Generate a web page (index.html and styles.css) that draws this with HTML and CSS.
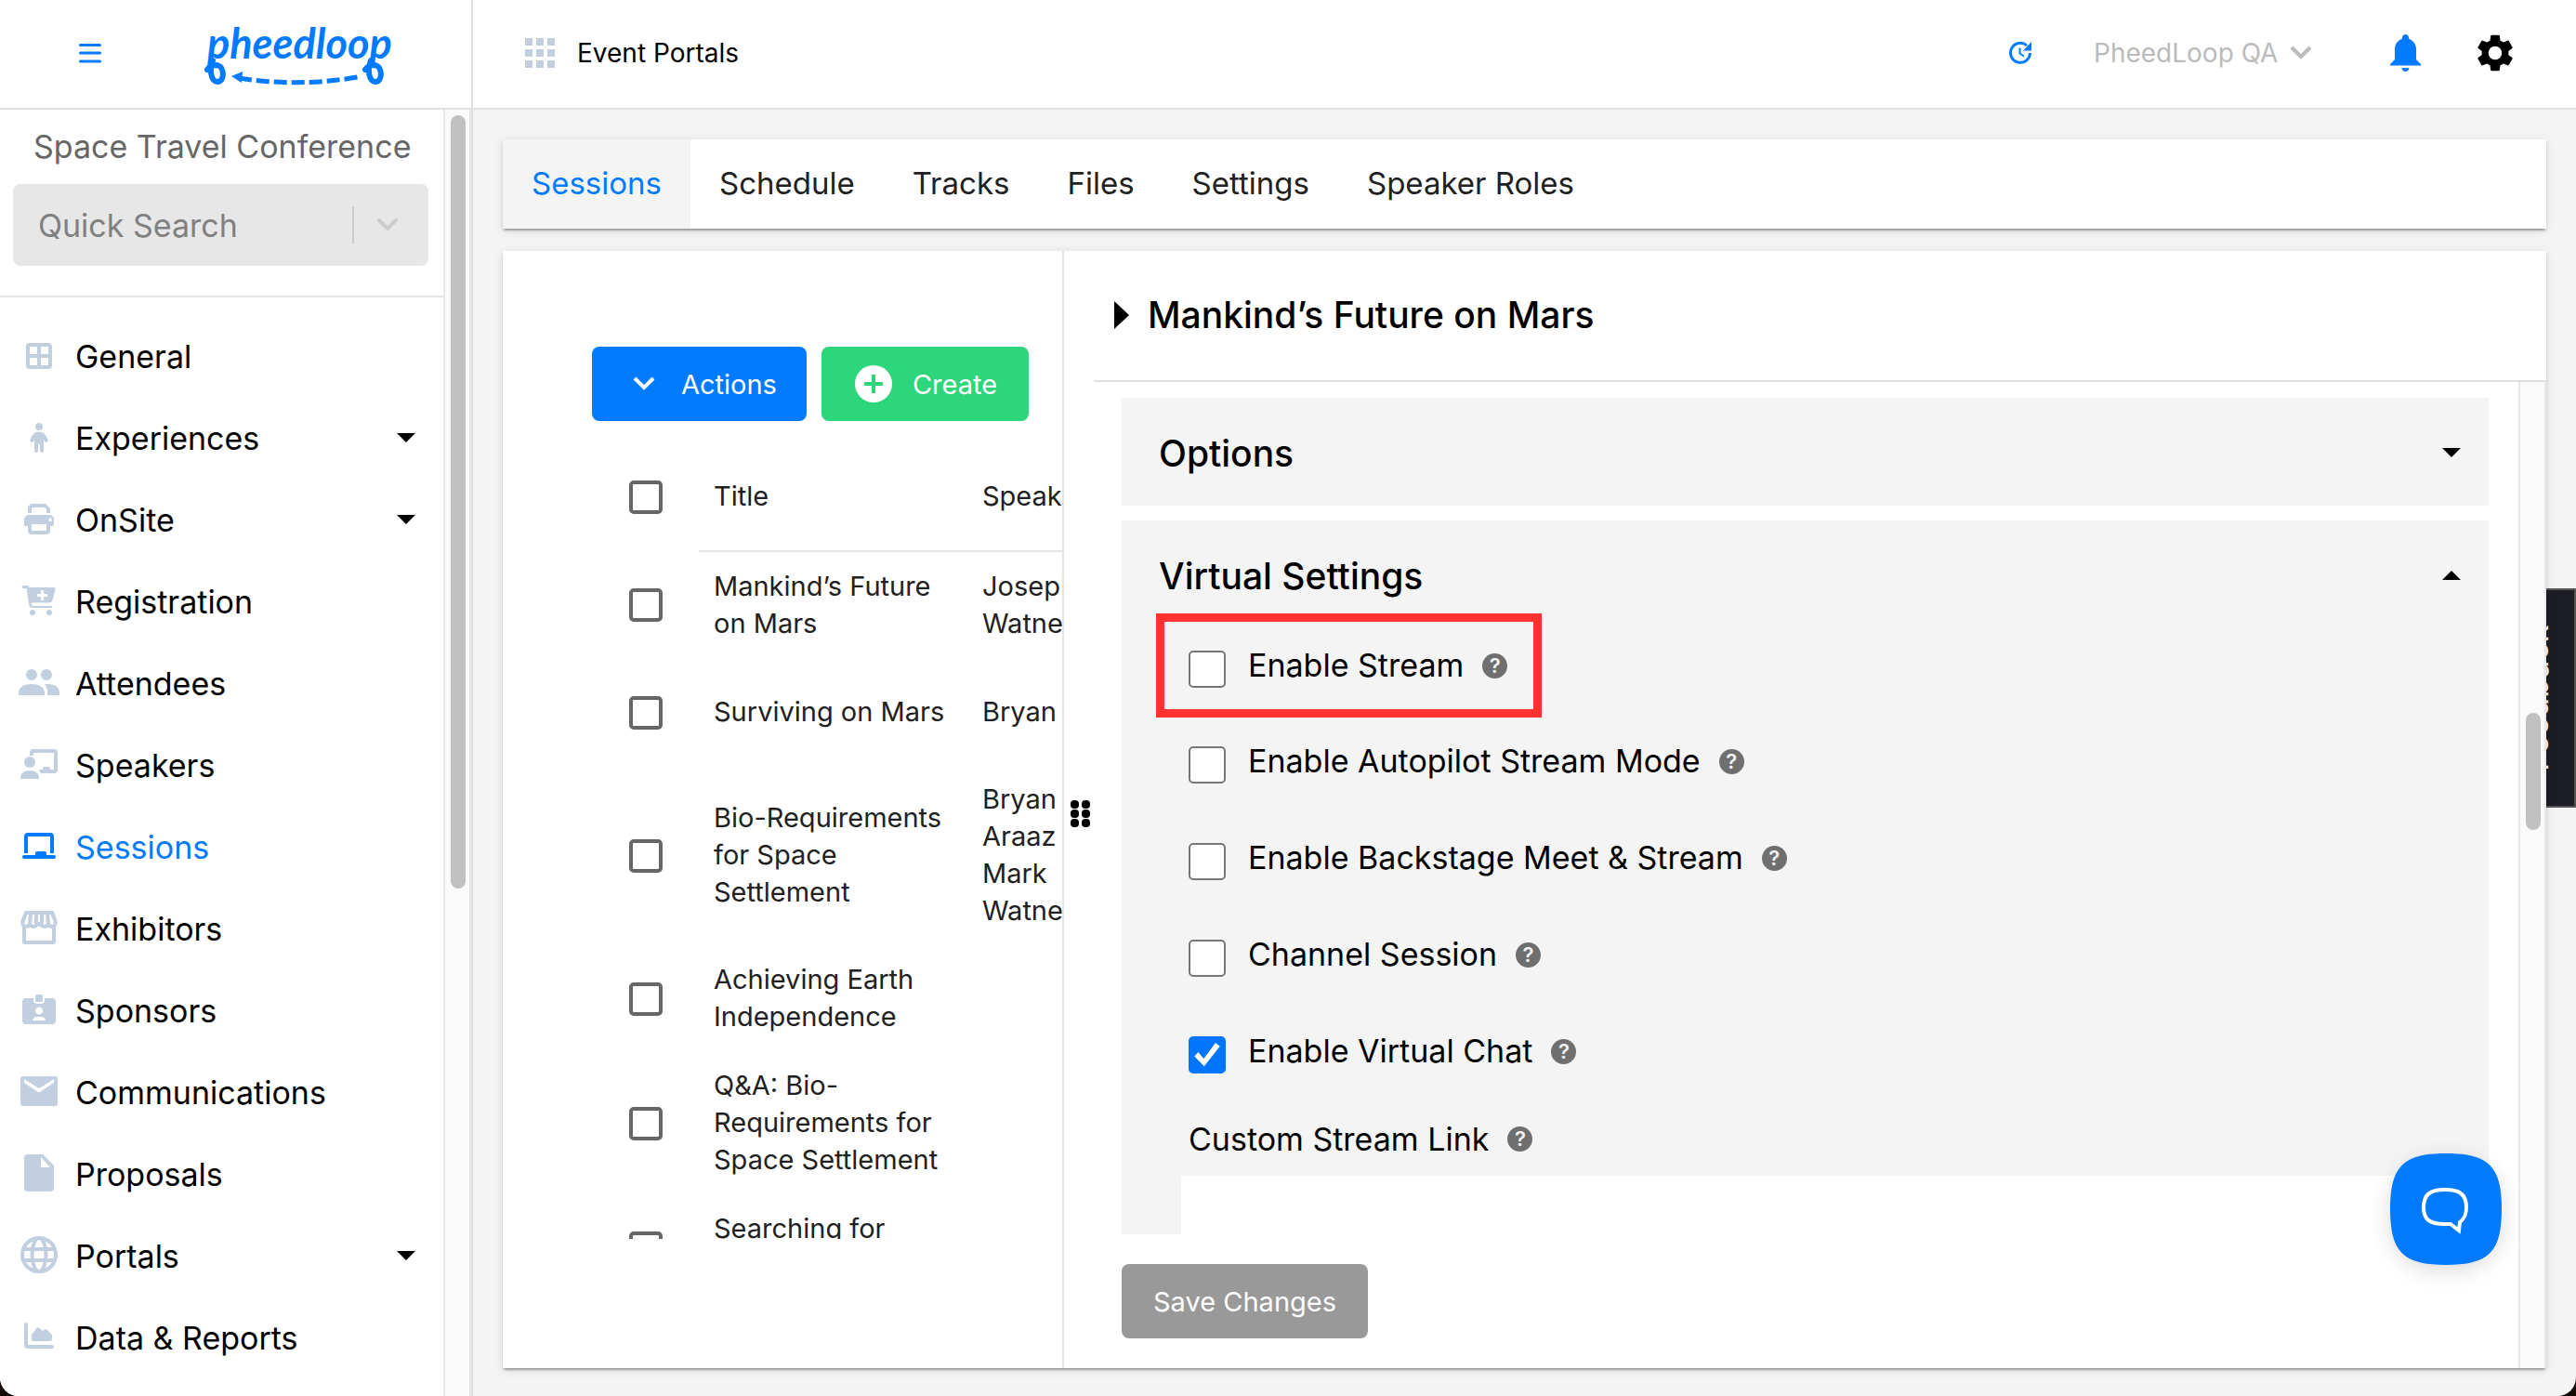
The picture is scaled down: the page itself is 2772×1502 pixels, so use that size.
FILE: index.html
```html
<!DOCTYPE html>
<html lang="en">
<head>
    <meta charset="UTF-8">
    <meta name="viewport" content="width=device-width, initial-scale=1.0">
    <title>Sessions</title>
    <link rel="stylesheet" href="styles.css">
</head>
<body>

<div class="app">

    <header class="header">
        <div class="brand">
            <button class="icon-btn" aria-label="Toggle menu">
                <svg width="24" height="24" viewBox="0 0 24 24" fill="none" stroke="#007bff" stroke-width="3" stroke-linecap="round"><path d="M1.500 3.500h21M1.500 12h21M1.500 21h21"/></svg>
            </button>
            <svg class="logo" width="204" height="76" viewBox="0 0 204 76" role="img" aria-label="pheedloop">
                <text x="4" y="44" class="logo-text">pheedloop</text>
                <g fill="none" stroke="#007bff" stroke-width="6" stroke-linecap="round">
                    <path d="M10 46c-4 10-2 23 5 23 8 0 8-17-1-18-5 0-8 2-10 5"/>
                    <path d="M180 46c-4 10-2 23 5 23 8 0 8-17-1-18-5 0-8 2-10 5"/>
                    <path d="M38 65q62 10 128-1" stroke-width="5" stroke-linecap="butt" stroke-dasharray="14 5"/>
                </g>
                <path d="M30 63l12-5-1 12z" fill="#007bff"/>
            </svg>
        </div>
        <div class="topbar">
            <a href="#" class="portals-link">
                <svg width="32" height="32" viewBox="0 0 32 32" fill="#c2cfe0"><path d="M0 0h8v8H0zM12 0h8v8h-8zM24 0h8v8h-8zM0 12h8v8H0zM12 12h8v8h-8zM24 12h8v8h-8zM0 24h8v8H0zM12 24h8v8h-8zM24 24h8v8h-8z"/></svg>
                Event Portals
            </a>
            <div class="topbar-right">
                <button class="icon-btn" aria-label="Recent updates">
                    <svg width="26" height="26" viewBox="0 0 26 26" fill="none" stroke="#007bff" stroke-width="3"><path d="M20 5A10.500 10.500 0 1 0 23.500 13"/><path d="M12.500 7.500v6l4.500 3" stroke-width="2"/><path d="M25 1v9.500h-9z" fill="#007bff" stroke="none"/></svg>
                </button>
                <div class="account">
                    <select aria-label="Account"><option>PheedLoop QA</option></select>
                    <svg width="24" height="16" viewBox="0 0 24 16" fill="none" stroke="#bbb" stroke-width="4"><path d="M2 2l10 10L22 2"/></svg>
                </div>
                <button class="icon-btn" aria-label="Notifications">
                    <svg width="33" height="40" viewBox="0 0 33 40" fill="#007bff"><path d="M16.500 0c2 0 3.500 1.500 3.500 3.500v1.200c5 1.600 8 6 8 11.300v11l5 5v1.500H0V32l5-5V16c0-5.300 3-9.700 8-11.300V3.500C13 1.500 14.500 0 16.500 0z"/><path d="M12.500 36h8c0 2.300-1.800 4-4 4s-4-1.700-4-4z"/></svg>
                </button>
                <button class="icon-btn" aria-label="Settings">
                    <svg width="40" height="40" viewBox="2 2 20 20"><path d="M19.140 12.940c.04-.3.06-.61.06-.94 0-.32-.02-.64-.07-.94l2.030-1.580c.18-.14.23-.41.12-.61l-1.920-3.320c-.12-.22-.37-.29-.59-.22l-2.390.96c-.5-.38-1.030-.7-1.620-.94l-.36-2.540c-.04-.24-.24-.41-.48-.41h-3.840c-.24 0-.43.17-.47.41l-.36 2.540c-.59.24-1.130.57-1.620.94l-2.390-.96c-.22-.08-.47 0-.59.22L2.740 8.870c-.12.21-.08.47.12.61l2.030 1.580c-.05.3-.09.63-.09.94s.02.64.07.94l-2.030 1.580c-.18.14-.23.41-.12.61l1.920 3.320c.12.22.37.29.59.22l2.390-.96c.5.38 1.030.7 1.620.94l.36 2.540c.05.24.24.41.48.41h3.840c.24 0 .44-.17.47-.41l.36-2.540c.59-.24 1.130-.56 1.620-.94l2.390.96c.22.08.47 0 .59-.22l1.920-3.320c.12-.22.07-.47-.12-.61l-2.010-1.580zM12 15.600c-1.980 0-3.600-1.620-3.600-3.600s1.620-3.600 3.600-3.600 3.600 1.620 3.600 3.600-1.620 3.600-3.600 3.600z"/></svg>
                </button>
            </div>
        </div>
    </header>

    <div class="layout">

        <aside class="sidebar">
            <div class="sidebar-content">
                <div class="event">
                    <p class="event-name">Space Travel Conference</p>
                    <div class="search">
                        <input type="text" placeholder="Quick Search" aria-label="Quick Search">
                        <svg width="22" height="16" viewBox="0 0 22 16" fill="none" stroke="#ccc" stroke-width="4" stroke-linecap="round" stroke-linejoin="round"><path d="M2 3l9 9 9-9"/></svg>
                    </div>
                </div>
                <nav class="nav">
                    <a href="#">
                        <svg viewBox="0 0 44 44"><path fill-rule="evenodd" d="M12 8h20a4 4 0 0 1 4 4v20a4 4 0 0 1-4 4H12a4 4 0 0 1-4-4V12a4 4 0 0 1 4-4zM12 12v8h8v-8zM24 12v8h8v-8zM12 24v8h8v-8zM24 24v8h8v-8z"/></svg>
                        General
                    </a>
                    <a href="#">
                        <svg viewBox="0 0 44 44"><circle cx="22" cy="10" r="4"/><path d="M22 15.500c5 0 7 3 9.500 8.500 1 2.500-2.500 4-3.500 2l-1-2v12a2 2 0 0 1-4 0v-7h-2v7a2 2 0 0 1-4 0V24l-1 2c-1 2-4.500.5-3.500-2 2.500-5.500 4.500-8.500 9.500-8.500z"/></svg>
                        Experiences
                        <i class="caret"></i>
                    </a>
                    <a href="#">
                        <svg viewBox="0 0 44 44"><path d="M10 15v-5a5 5 0 0 1 5-5h14l5 5v5h-4v-4l-2-2H16a2 2 0 0 0-2 2v4z"/><path fill-rule="evenodd" d="M11 17h22a5 5 0 0 1 5 5v5a2 2 0 0 1-2 2h-2v5a4 4 0 0 1-4 4H14a4 4 0 0 1-4-4v-5H8a2 2 0 0 1-2-2v-5a5 5 0 0 1 5-5zM14 27v7h16v-7zM32.500 20.500v3.500h3v-3.500z"/></svg>
                        OnSite
                        <i class="caret"></i>
                    </a>
                    <a href="#">
                        <svg viewBox="0 0 44 44"><path fill-rule="evenodd" d="M5 5h5l2 2h26c1.500 0 2 1 1.500 2.500l-3 11c-.5 2-1.500 3-3.500 3H14v1.500q.5 2 2 2h20v2H16c-3 0-4.500-1-5-4L8.500 8H5a1.500 1.500 0 0 1 0-3zM24 10v4h-4v3h4v4h3v-4h4v-3h-4v-4z"/><circle cx="15" cy="34" r="3"/><circle cx="33" cy="34" r="3"/></svg>
                        Registration
                    </a>
                    <a href="#">
                        <svg viewBox="0 0 44 44"><circle cx="14" cy="13" r="6"/><circle cx="30" cy="13" r="6"/><path d="M0 35v-2c0-7 6-10 14-10s14 3 14 10v2zM31 35v-3c0-4-1-6-3-9 9-.5 16 2 16 9v3z"/></svg>
                        Attendees
                    </a>
                    <a href="#">
                        <svg viewBox="0 0 44 44"><path d="M12 12V9a4 4 0 0 1 4-4h22a4 4 0 0 1 4 4v18a4 4 0 0 1-4 4H24l-2-4h4v-1.500a1.500 1.500 0 0 1 1.500-1.500h5a1.500 1.500 0 0 1 1.500 1.500V27h4V9H16v3z"/><circle cx="12" cy="19" r="6"/><path d="M2 37v-1c0-5 4-8 10-8s10 3 10 8v1z"/></svg>
                        Speakers
                    </a>
                    <a href="#" class="active">
                        <svg viewBox="0 0 44 44"><path d="M6 29V11a4 4 0 0 1 4-4h24a4 4 0 0 1 4 4v18h-4V11H10v18z"/><path d="M6 31h12v-2a2 2 0 0 1 2-2h8a2 2 0 0 1 2 2v2h8a2 2 0 0 1 0 4H6a2 2 0 0 1 0-4z"/></svg>
                        Sessions
                    </a>
                    <a href="#">
                        <svg viewBox="0 0 44 44" class="outline"><path d="M8 5h28l3.500 9c1 3-.5 6-3.500 6-2 0-3-1-4-2-1.500 2-5.500 3-8 0l-2-1-2 1c-2.500 3-6.500 2-8 0-1 1-2 2-4 2-3 0-4.500-3-3.500-6zM13 5l-1 13M19 5v13M25 5v13M31 5l1 13M6 20v16a1 1 0 0 0 1 1h30a1 1 0 0 0 1-1V20"/></svg>
                        Exhibitors
                    </a>
                    <a href="#">
                        <svg viewBox="0 0 44 44"><rect x="18" y="5" width="8" height="8" rx="2"/><path fill-rule="evenodd" d="M8 9h8v2a4 4 0 0 0 4 4h4a4 4 0 0 0 4-4V9h8a4 4 0 0 1 4 4v20a4 4 0 0 1-4 4H8a4 4 0 0 1-4-4V13a4 4 0 0 1 4-4zM22 18.500a4 4 0 1 0 .01 0zM15 33h14c0-2-2-4-5-4h-4c-3 0-5 2-5 4z"/></svg>
                        Sponsors
                    </a>
                    <a href="#">
                        <svg viewBox="0 0 44 44"><path fill-rule="evenodd" d="M5 5h34a3 3 0 0 1 3 3v26a3 3 0 0 1-3 3H5a3 3 0 0 1-3-3V8a3 3 0 0 1 3-3zM6 8v4l16 10.500L38 12V8L22 18z"/></svg>
                        Communications
                    </a>
                    <a href="#">
                        <svg viewBox="0 0 44 44"><path fill-rule="evenodd" d="M10 1h16l12 12v24a4 4 0 0 1-4 4H10a4 4 0 0 1-4-4V5a4 4 0 0 1 4-4zM24 4v11h10z"/></svg>
                        Proposals
                    </a>
                    <a href="#">
                        <svg viewBox="0 0 44 44" class="outline"><circle cx="22" cy="21" r="18"/><ellipse cx="22" cy="21" rx="7.500" ry="18"/><path d="M6 15h32M6 27h32"/></svg>
                        Portals
                        <i class="caret"></i>
                    </a>
                    <a href="#">
                        <svg viewBox="0 0 44 44"><path d="M8 6a2 2 0 0 1 2 2v21a1 1 0 0 0 1 1h25a2 2 0 0 1 0 4H10a4 4 0 0 1-4-4V8a2 2 0 0 1 2-2z"/><path d="M14 19l5-6.500q2-2 4 0l3 2.500 2-1.500q2-1 3.500 1L36 19v5a2 2 0 0 1-2 2H16a2 2 0 0 1-2-2z"/></svg>
                        Data &amp; Reports
                    </a>
                </nav>
            </div>
            <div class="scrollbar"><div class="thumb thumb-nav"></div></div>
        </aside>

        <main class="main">
            <nav class="tabs">
                <a href="#" class="active">Sessions</a>
                <a href="#">Schedule</a>
                <a href="#">Tracks</a>
                <a href="#">Files</a>
                <a href="#">Settings</a>
                <a href="#">Speaker Roles</a>
            </nav>

            <div class="card">
                <section class="list-pane">
                    <div class="buttons">
                        <button class="btn btn-blue">
                            <svg width="24" height="16" viewBox="0 0 24 16" fill="none" stroke="#fff" stroke-width="4"><path d="M2 2l10 10L22 2"/></svg>
                            Actions
                        </button>
                        <button class="btn btn-green">
                            <svg width="40" height="40" viewBox="0 0 40 40"><circle cx="20" cy="20" r="20" fill="#fff"/><path d="M20 10v20M10 20h20" stroke="#2dd57b" stroke-width="4"/></svg>
                            Create
                        </button>
                    </div>
                    <div class="table-wrap">
                        <table>
                            <thead>
                                <tr>
                                    <td class="check"><input type="checkbox" aria-label="Select all"></td>
                                    <th>Title</th>
                                    <th>Speakers</th>
                                </tr>
                            </thead>
                            <tbody>
                                <tr>
                                    <td class="check"><input type="checkbox" aria-label="Select Mankind’s Future on Mars"></td>
                                    <td>Mankind’s Future<br>on Mars</td>
                                    <td>Joseph<br>Watney</td>
                                </tr>
                                <tr>
                                    <td class="check"><input type="checkbox" aria-label="Select Surviving on Mars"></td>
                                    <td>Surviving on Mars</td>
                                    <td>Bryan</td>
                                </tr>
                                <tr>
                                    <td class="check"><input type="checkbox" aria-label="Select Bio-Requirements"></td>
                                    <td>Bio-Requirements<br>for Space<br>Settlement</td>
                                    <td>Bryan<br>Araaz<br>Mark<br>Watney</td>
                                </tr>
                                <tr>
                                    <td class="check"><input type="checkbox" aria-label="Select Achieving Earth Independence"></td>
                                    <td>Achieving Earth<br>Independence</td>
                                    <td></td>
                                </tr>
                                <tr>
                                    <td class="check"><input type="checkbox" aria-label="Select Q&amp;A"></td>
                                    <td>Q&amp;A: Bio-<br>Requirements for<br>Space Settlement</td>
                                    <td></td>
                                </tr>
                                <tr>
                                    <td class="check"><input type="checkbox" aria-label="Select Searching for Life"></td>
                                    <td>Searching for<br>Life</td>
                                    <td></td>
                                </tr>
                            </tbody>
                        </table>
                    </div>
                </section>

                <section class="detail-pane">
                    <svg class="drag" width="22" height="30" viewBox="0 0 22 30"><rect width="9" height="9" rx="4"/><rect x="12" width="9" height="9" rx="4"/><rect y="10" width="9" height="9" rx="4"/><rect x="12" y="10" width="9" height="9" rx="4"/><rect y="20" width="9" height="9" rx="4"/><rect x="12" y="20" width="9" height="9" rx="4"/></svg>
                    <div class="detail-head">
                        <svg width="16" height="30" viewBox="0 0 16 30"><path d="M0 0l16 15L0 30z"/></svg>
                        <h1>Mankind’s Future on Mars</h1>
                    </div>
                    <div class="detail-body">
                        <div class="detail-content">
                            <div class="panels">
                                <div class="panel">
                                    <h2 class="panel-head">Options <i class="caret"></i></h2>
                                </div>
                                <div class="panel">
                                    <h2 class="panel-head">Virtual Settings <i class="caret up"></i></h2>
                                    <div class="fields">
                                        <div class="field highlight">
                                            <input type="checkbox" id="stream">
                                            <label for="stream">Enable Stream</label>
                                            <span class="help">?</span>
                                        </div>
                                        <div class="field">
                                            <input type="checkbox" id="autopilot">
                                            <label for="autopilot">Enable Autopilot Stream Mode</label>
                                            <span class="help">?</span>
                                        </div>
                                        <div class="field">
                                            <input type="checkbox" id="backstage">
                                            <label for="backstage">Enable Backstage Meet &amp; Stream</label>
                                            <span class="help">?</span>
                                        </div>
                                        <div class="field">
                                            <input type="checkbox" id="channel">
                                            <label for="channel">Channel Session</label>
                                            <span class="help">?</span>
                                        </div>
                                        <div class="field">
                                            <input type="checkbox" id="chat" checked>
                                            <label for="chat">Enable Virtual Chat</label>
                                            <span class="help">?</span>
                                        </div>
                                        <div class="field-label">
                                            <label for="link">Custom Stream Link</label>
                                            <span class="help">?</span>
                                        </div>
                                        <input type="text" id="link" class="text-input">
                                    </div>
                                </div>
                            </div>
                            <div class="detail-foot">
                                <button class="btn btn-grey">Save Changes</button>
                            </div>
                        </div>
                        <div class="scrollbar"><div class="thumb thumb-detail"></div></div>
                    </div>
                </section>
            </div>
        </main>
    </div>

    <button class="feedback">Feedback</button>

    <button class="chat" aria-label="Open chat">
        <svg width="120" height="120" viewBox="0 0 120 120">
            <path d="M60 0c46 0 60 14 60 60s-14 60-60 60S0 106 0 60 14 0 60 0z" fill="#007bff"/>
            <path d="M59 39c17 0 23 6 23 19 0 8-2 12-7 16l-1 9-9-7h-6c-17 0-23-5-23-18s6-19 23-19z" fill="none" stroke="#fff" stroke-width="4"/>
        </svg>
    </button>
</div>

</body>
</html>
```
FILE: styles.css
```css
* { box-sizing: border-box; margin: 0; padding: 0; }
body { font-family: Inter, "Open Sans", sans-serif; font-size: 34px; color: #000; background: #140a04; }
a { color: inherit; text-decoration: none; }
button, input, select { font: inherit; border: none; background: none; }
button { cursor: pointer; }
svg { display: block; flex-shrink: 0; }

.app { position: relative; display: flex; flex-direction: column; height: 100vh; background: #f4f4f4; border-radius: 0 0 20px 20px; overflow: hidden; }

/* header */
.header { display: flex; height: 118px; background: #fff; border-bottom: 2px solid #e0e0e0; }
.brand { display: flex; align-items: center; gap: 110px; width: 509px; padding: 0 0 2px 85px; border-right: 2px solid #e0e0e0; }
.logo-text { font-family: Lato, sans-serif; font-size: 45px; font-weight: 700; font-style: italic; fill: #007bff; }
.icon-btn { display: flex; }
.topbar { flex: 1; display: flex; align-items: center; justify-content: space-between; padding: 0 67px 2px 56px; font-size: 28px; }
.portals-link { display: flex; align-items: center; gap: 24px; }
.topbar-right { display: flex; align-items: center; }
.account { display: flex; align-items: center; gap: 12px; margin: 0 84px 0 66px; color: #bbb; }
.account select { appearance: none; color: #bbb; }
.topbar-right .icon-btn + .icon-btn { margin-left: 60px; }

/* sidebar */
.layout { flex: 1; display: flex; min-height: 0; }
.sidebar { display: flex; width: 509px; background: #fff; border-right: 2px solid #e0e0e0; }
.sidebar-content { flex: 1; overflow: hidden; }
.event { height: 202px; padding: 16px 16px 0 14px; border-bottom: 2px solid #e5e5e5; }
.event-name { padding-left: 22px; line-height: 48px; color: #666; }
.search { display: flex; align-items: center; height: 88px; margin-top: 16px; padding: 0 33px 0 27px; background: #e7e7e7; border-radius: 8px; }
.search input { flex: 1; min-width: 0; height: 40px; margin-right: 25px; border-right: 2px solid #ccc; outline: none; }
.search input::placeholder { color: #808080; }
.nav { padding-top: 19px; }
.nav a { display: flex; align-items: center; gap: 17px; height: 88px; padding: 0 30px 0 20px; }
.nav svg { width: 44px; height: 44px; fill: #c2cfe0; }
.nav svg.outline { fill: none; stroke: #c2cfe0; stroke-width: 4; }
.nav .active { color: #007bff; }
.nav .active svg { fill: #007bff; }
.caret { margin-left: auto; border: 10px solid transparent; border-top-color: #000; border-bottom: none; }
.caret.up { border-bottom: 10px solid #000; border-top: none; }
.scrollbar { width: 30px; background: #fafafa; border: solid #e8e8e8; border-width: 0 2px; }
.thumb { width: 16px; margin-left: 6px; background: #c1c1c1; border-radius: 8px; }
.thumb-nav { height: 832px; margin-top: 6px; }
.thumb-detail { height: 126px; margin-top: 356px; }

/* main */
.main { position: relative; z-index: 1; flex: 1; display: flex; flex-direction: column; gap: 24px; min-width: 0; padding: 32px 32px 30px; }
.tabs, .card { background: #fff; box-shadow: 0 4px 2px -2px rgba(0,0,0,0.2), 0 2px 2px rgba(0,0,0,0.14), 0 2px 10px rgba(0,0,0,0.12); }
.tabs { display: flex; height: 96px; font-size: 33px; color: #212121; }
.tabs a { display: flex; align-items: center; padding: 0 31px 2px; }
.tabs .active { color: #007bff; background: #f4f4f4; }
.card { flex: 1; display: flex; min-height: 0; }

/* session list */
.list-pane { display: flex; flex-direction: column; width: 604px; padding: 103px 0 139px 96px; overflow: hidden; border-right: 2px solid #e5e5e5; }
.buttons { display: flex; gap: 16px; }
.btn { display: flex; align-items: center; height: 80px; border-radius: 8px; color: #fff; font-size: 29px; }
.btn-blue { gap: 28px; padding: 0 32px 0 44px; background: #007bff; }
.btn-green { gap: 22px; padding: 0 34px 0 36px; background: #2dd57b; }
.btn-grey { padding: 0 34px; background: #999; }
.table-wrap { flex: 1; min-height: 0; margin-top: 24px; overflow: hidden; }
table { width: 604px; table-layout: fixed; border-collapse: collapse; font-size: 29px; line-height: 40px; color: #212121; }
th, td { height: 116px; padding: 15px 16px 17px; text-align: left; font-weight: 400; }
th { border-bottom: 2px solid #e5e5e5; }
th:nth-child(2) { width: 289px; }
.check { width: 115px; padding: 0; }
.check input { display: block; appearance: none; width: 36px; height: 36px; margin: 0 auto; border: 4px solid #666; border-radius: 5px; }

/* session detail */
.detail-pane { position: relative; flex: 1; display: flex; flex-direction: column; min-width: 0; }
.drag { position: absolute; left: 7px; top: 591px; }
.detail-head { display: flex; align-items: center; gap: 20px; height: 141px; margin-left: 32px; padding: 0 22px 2px; border-bottom: 2px solid #e0e0e0; }
h1, h2 { font-size: 39px; font-weight: 500; }
.detail-body { flex: 1; display: flex; min-height: 0; }
.detail-content { flex: 1; display: flex; flex-direction: column; padding: 0 32px 0 62px; }
.panels { flex: 1; min-height: 0; padding-top: 17px; overflow: hidden; }
.panel { margin-bottom: 16px; background: #f4f4f4; }
.panel-head { display: flex; align-items: center; height: 116px; padding: 2px 30px 0 40px; }
.fields { padding: 0 64px; }
.field { display: flex; align-items: center; height: 104px; padding: 0 8px; }
.field input { position: relative; appearance: none; width: 40px; height: 40px; margin: 8px 24px 0 0; background: #fff; border: 2px solid #767676; border-radius: 5px; }
.field input:checked { background: #0075ff; border-color: #0075ff; }
.field input:checked::before { content: ""; display: block; height: 36px; background: #fff; clip-path: polygon(12% 54%, 23% 42%, 40% 61%, 75% 14%, 88% 24%, 41% 84%); }
.field label { padding-bottom: 2px; }
.highlight { width: max-content; height: 112px; margin: -16px 0 -5px -27px; padding: 0 28px 0 26px; border: 9px solid #ff3131; }
.help { display: inline-flex; align-items: center; justify-content: center; width: 27px; height: 27px; margin-left: 20px; border-radius: 50%; background: #6f6f6f; color: #f4f4f4; font-size: 22px; font-weight: 600; }
.field-label { display: flex; align-items: center; height: 80px; margin-top: 2px; padding: 0 8px; }
.text-input { display: block; width: 100%; height: 88px; background: #fff; border-radius: 2px; }
.detail-foot { padding: 32px 0; }

/* floating widgets */
.feedback { position: absolute; right: 0; top: 633px; display: flex; align-items: center; justify-content: center; width: 76px; height: 236px; padding-left: 10px; background: #1d1e23; border: 2px solid #555; color: #fff; writing-mode: vertical-rl; transform: rotate(180deg); }
.chat { position: absolute; z-index: 2; right: 80px; bottom: 141px; border-radius: 50px; box-shadow: 0 6px 24px rgba(0,0,0,0.14); }
```
